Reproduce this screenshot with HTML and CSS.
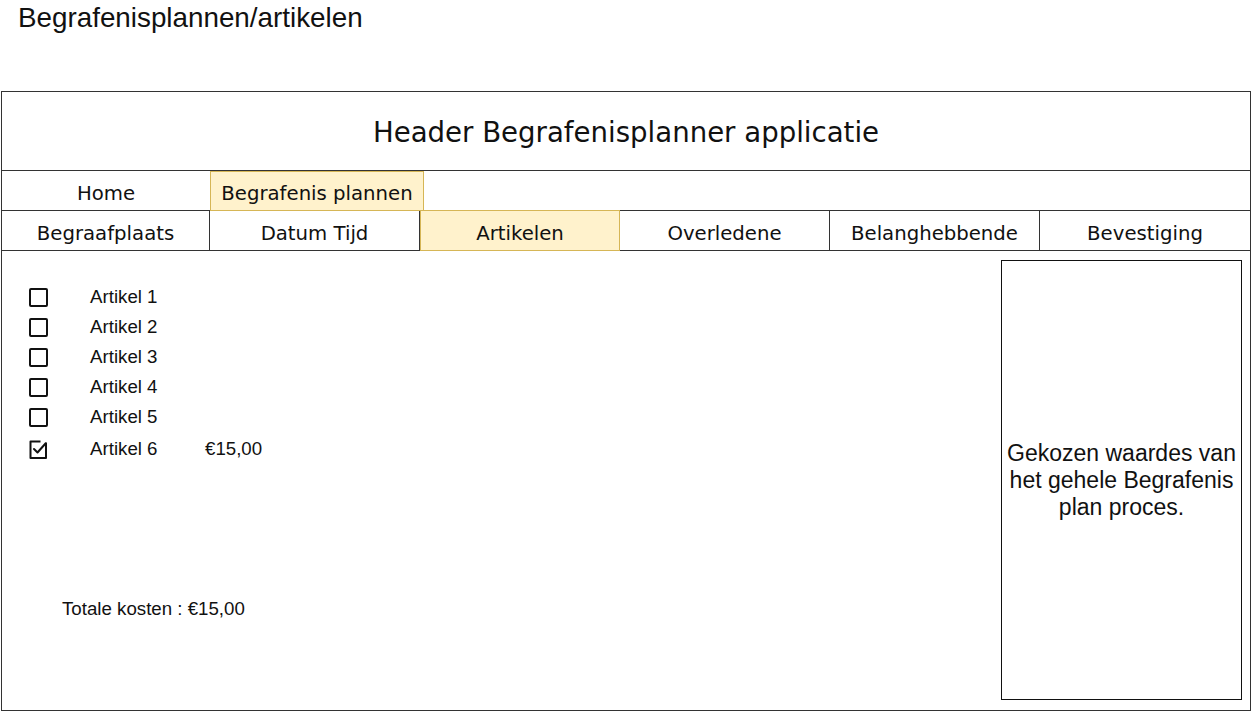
FILE: index.html
```html
<!DOCTYPE html>
<html>
<head>
<meta charset="utf-8">
<link rel="stylesheet" href="styles.css">
</head>
<body>
<div class="title">Begrafenisplannen/artikelen</div>
<div class="frame">
  <div class="header">Header Begrafenisplanner applicatie</div>
  <div class="nav nav1">
    <div class="cell c-home">Home</div>
    <div class="cell c-plan active">Begrafenis plannen</div>
  </div>
  <div class="nav nav2">
    <div class="cell w1">Begraafplaats</div>
    <div class="cell w2">Datum Tijd</div>
    <div class="cell w3 active">Artikelen</div>
    <div class="cell w4">Overledene</div>
    <div class="cell w5">Belanghebbende</div>
    <div class="cell w6 last">Bevestiging</div>
  </div>
  <div class="content">
    <div class="left">
      <ul class="items">
        <li class="item"><span class="box"></span><span class="name">Artikel 1</span></li>
        <li class="item"><span class="box"></span><span class="name">Artikel 2</span></li>
        <li class="item"><span class="box"></span><span class="name">Artikel 3</span></li>
        <li class="item"><span class="box"></span><span class="name">Artikel 4</span></li>
        <li class="item"><span class="box"></span><span class="name">Artikel 5</span></li>
        <li class="item checked"><span class="box"><svg viewBox="0 0 19 19" width="19" height="19"><path d="M17 2.5 V18 H1.5 V1.5 H11.5" fill="none" stroke="#111" stroke-width="2" stroke-linejoin="round"/><path d="M5 9 L8.5 12.5 L16.5 3.5" fill="none" stroke="#111" stroke-width="2" stroke-linecap="round" stroke-linejoin="round"/></svg></span><span class="name">Artikel 6</span><span class="price">€15,00</span></li>
      </ul>
      <div class="total">Totale kosten : €15,00</div>
    </div>
    <div class="summary">Gekozen waardes van het gehele Begrafenis plan proces.</div>
  </div>
</div>
</body>
</html>
```

FILE: styles.css
```css
html, body {
  margin: 0;
  padding: 0;
  background: #fff;
}
body {
  font-family: "Liberation Sans", Arial, sans-serif;
  color: #111;
  width: 1252px;
  height: 711px;
  overflow: hidden;
}
.title {
  font-size: 27.8px;
  line-height: 32px;
  padding: 2px 0 0 18px;
  height: 91px;
  box-sizing: border-box;
}
.frame {
  margin-left: 1px;
  width: 1250px;
  height: 620px;
  box-sizing: border-box;
  border: 1.5px solid #333;
  display: flex;
  flex-direction: column;
}
.header {
  height: 79px;
  flex: none;
  border-bottom: 1.5px solid #333;
  box-sizing: border-box;
  display: flex;
  align-items: center;
  justify-content: center;
  font-family: "DejaVu Sans", Verdana, sans-serif;
  font-size: 27.6px;
  padding-top: 2px;
}
.nav {
  display: flex;
  height: 40px;
  flex: none;
  border-bottom: 1.5px solid #333;
  box-sizing: border-box;
  font-family: "DejaVu Sans", Verdana, sans-serif;
  font-size: 19.7px;
}
.cell {
  box-sizing: border-box;
  display: flex;
  align-items: center;
  justify-content: center;
  padding-top: 5px;
  flex: none;
}
.nav1 .c-home { width: 208px; }
.nav1 .c-plan { width: 214px; }
.nav2 .cell { border-right: 1px solid #333; }
.nav2 .w1 { width: 208px; }
.nav2 .w2 { width: 210px; }
.nav2 .w3 { width: 200px; }
.nav2 .w4 { width: 210px; }
.nav2 .w5 { width: 210px; }
.nav2 .w6 { flex: 1; }
.nav2 .last { border-right: none; }
.cell.active {
  background: #fff2cc;
  border: 1px solid #d6b656;
}
.nav1 .cell.active { margin-bottom: -1px; }
.nav2 .cell.active { margin-top: -1px; margin-bottom: -1px; height: 41px; }
.content {
  flex: 1;
  display: flex;
  position: relative;
}
.left {
  flex: 1;
  display: flex;
  flex-direction: column;
}
.items {
  list-style: none;
  margin: 0;
  padding: 31px 0 0 27px;
}
.item {
  display: flex;
  align-items: center;
  height: 30px;
  font-size: 18.7px;
}
.item.checked { height: 34px; }
.box {
  width: 19px;
  height: 19px;
  box-sizing: border-box;
  border: 2px solid #111;
  border-radius: 2px;
  flex: none;
  margin-right: 42px;
}
.checked .box {
  border: none;
}
.checked .box svg { display: block; }
.name {
  width: 115px;
}
.total {
  font-size: 18.7px;
  padding: 132px 0 0 60px;
}
.summary {
  width: 241px;
  height: 440px;
  margin: 9px 8px 0 0;
  box-sizing: border-box;
  border: 1px solid #111;
  display: flex;
  align-items: center;
  justify-content: center;
  text-align: center;
  font-size: 23px;
  line-height: 27px;
  padding: 0 2px;
}
```
